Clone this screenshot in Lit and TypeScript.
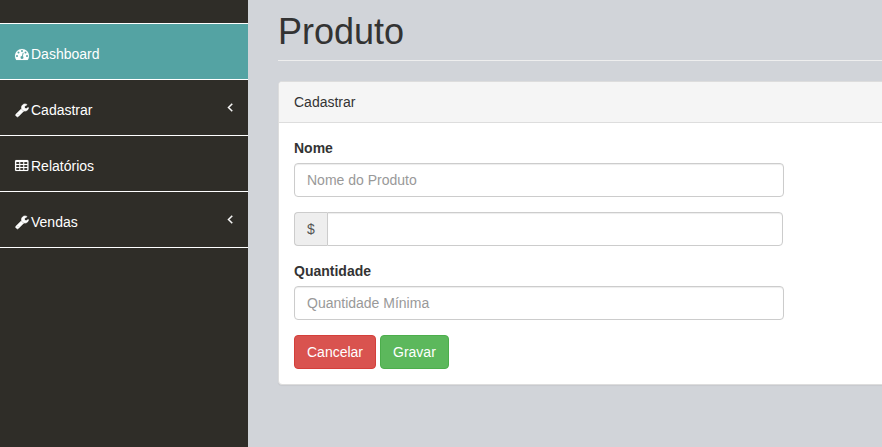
import { LitElement, html, css, svg } from "lit";
import { customElement } from "lit/decorators.js";
import { classMap } from "lit/directives/class-map.js";

const cells = [160, 672, 1184]
  .flatMap((x) => [384, 768, 1152].map((y) => `M${x} ${y}v256h384v-256z`))
  .join("");

const icons: Record<string, string> = {
  gauge: "M384 1152q0-53-37.500-90.500t-90.500-37.500-90.500 37.500-37.500 90.500 37.500 90.500 90.500 37.500 90.500-37.500 37.500-90.500zm192-448q0-53-37.500-90.500t-90.500-37.500-90.500 37.500-37.500 90.500 37.500 90.500 90.500 37.500 90.500-37.500 37.500-90.500zm428 481l101-382q6-26-7.500-48.500t-38.500-29.500-48 6.500-30 39.500l-101 382q-60 5-107 43.500t-63 98.500q-20 77 20 146t117 89 146-20 89-117q16-60-6-117t-72-91zm660-33q0-53-37.500-90.500t-90.500-37.500-90.500 37.500-37.500 90.500 37.500 90.500 90.500 37.500 90.500-37.500 37.500-90.500zm-640-640q0-53-37.500-90.500t-90.500-37.500-90.500 37.500-37.500 90.500 37.500 90.500 90.500 37.500 90.500-37.500 37.500-90.500zm448 192q0-53-37.500-90.500t-90.500-37.500-90.500 37.500-37.500 90.500 37.500 90.500 90.500 37.500 90.500-37.500 37.500-90.500zm320 448q0 261-141 483-19 29-54 29h-1402q-35 0-54-29-141-221-141-483 0-182 71-348t191-286 286-191 348-71 348 71 286 191 191 286 71 348z",
  wrench: "M448 1472q0-26-19-45t-45-19-45 19-19 45 19 45 45 19 45-19 19-45zm644-420l-682 682q-37 37-90 37-52 0-91-37l-106-108q-38-36-38-90 0-53 38-91l681-681q39 98 114.500 173.500t173.500 114.500zm634-435q0 39-23 106-47 134-164.500 217.500t-258.500 83.500q-185 0-316.500-131.500t-131.500-316.500 131.500-316.500 316.500-131.500q58 0 121.500 16.500t107.500 46.500q16 11 16 28t-16 28l-293 169v224l193 107q5-3 79-48.500t135.500-81 70.500-35.500q15 0 23.500 10t8.500 25z",
  table: "M1728 288v1088q0 66-47 113t-113 47h-1408q-66 0-113-47t-47-113v-1088q0-66 47-113t113-47h1408q66 0 113 47t47 113z" + cells,
  angle: "M1203 544q0 13-10 23l-393 393 393 393q10 10 10 23t-10 23l-50 50q-10 10-23 10t-23-10l-466-466q-10-10-10-23t10-23l466-466q10-10 23-10t23 10l50 50q10 10 10 23z",
};

const icon = (name: string, cls = "icon") => html`<svg class="${cls} ${name}" viewBox="0 0 1792 1792" aria-hidden="true">
  ${svg`<path fill="currentColor" stroke="currentColor" fill-rule="evenodd" d=${icons[name]} />`}
</svg>`;

const menu = [
  { label: "Dashboard", icon: "gauge", active: true },
  { label: "Cadastrar", icon: "wrench", expandable: true },
  { label: "Relatórios", icon: "table" },
  { label: "Vendas", icon: "wrench", expandable: true },
];

@customElement("side-menu")
export class SideMenu extends LitElement {
  static styles = css`
    :host {
      display: block;
      width: 248px;
      flex: none;
      box-sizing: border-box;
      padding-top: 23px;
      background: #2f2d28;
    }
    .list {
      list-style: none;
      margin: 0;
      padding: 0;
      border-top: 1px solid #fff;
    }
    .item {
      display: flex;
      align-items: center;
      height: 56px;
      box-sizing: border-box;
      padding: 20px 10px 15px 15px;
      border-bottom: 1px solid #fff;
      color: #fff;
    }
    .active {
      background: #54a3a3;
    }
    .icon {
      width: 14px;
      height: 14px;
      margin-right: 2px;
      flex: none;
      overflow: visible;
      stroke-width: 15px;
    }
    .wrench {
      stroke-width: 90px;
    }
    .arrow {
      width: 14px;
      height: 14px;
      margin: -6px 1px 0 auto;
      stroke-width: 60px;
    }
  `;

  render() {
    return html`<ul class="list">
      ${menu.map((m) => html`<li class=${classMap({ item: true, active: !!m.active })}>
        ${icon(m.icon)}<span>${m.label}</span>${m.expandable ? icon("angle", "arrow") : ""}
      </li>`)}
    </ul>`;
  }
}

@customElement("app-root")
export class AppRoot extends LitElement {
  static styles = css`
    :host {
      display: flex;
      height: 447px;
      overflow: hidden;
      background: #d1d4d9;
      color: #333;
      font: 14px/20px "Liberation Sans", Arial, sans-serif;
    }
    .main {
      flex: 1;
      min-width: 0;
      padding-left: 30px;
    }
    .title {
      margin: 0 0 20px;
      padding: 12px 0 9px;
      border-bottom: 1px solid #eee;
      font-size: 36px;
      font-weight: 400;
      line-height: 39px;
    }
    .panel {
      width: 640px;
      box-sizing: border-box;
      border: 1px solid #ddd;
      border-radius: 4px;
      background: #fff;
      box-shadow: 0 1px 1px rgba(0, 0, 0, 0.05);
    }
    .heading {
      padding: 10px 15px;
      border-bottom: 1px solid #ddd;
      border-radius: 3px 3px 0 0;
      background: #f5f5f5;
    }
    .body {
      padding: 15px;
    }
    .field {
      width: 490px;
      margin-bottom: 15px;
    }
    .label {
      display: block;
      margin-bottom: 5px;
      font-weight: 700;
    }
    .input {
      display: block;
      box-sizing: border-box;
      width: 100%;
      height: 34px;
      padding: 6px 12px;
      border: 1px solid #ccc;
      border-radius: 4px;
      background: #fff;
      box-shadow: inset 0 1px 1px rgba(0, 0, 0, 0.075);
      color: #555;
      font: inherit;
    }
    .input::placeholder {
      color: #999;
      opacity: 1;
    }
    .group {
      display: flex;
      width: 489px;
    }
    .addon {
      box-sizing: border-box;
      width: 33px;
      flex: none;
      padding: 6px 0 6px 12px;
      border: 1px solid #ccc;
      border-right: 0;
      border-radius: 4px 0 0 4px;
      background: #eee;
      color: #555;
    }
    .joined {
      flex: 1;
      min-width: 0;
      border-radius: 0 4px 4px 0;
    }
    .actions {
      display: flex;
      gap: 4px;
    }
    .btn {
      height: 34px;
      padding: 6px 12px;
      border: 1px solid;
      border-radius: 4px;
      color: #fff;
      font: inherit;
    }
    .danger {
      background: #d9534f;
      border-color: #d43f3a;
    }
    .success {
      background: #5cb85c;
      border-color: #4cae4c;
    }
  `;

  render() {
    return html`
      <side-menu></side-menu>
      <main class="main">
        <h1 class="title">Produto</h1>
        <section class="panel">
          <div class="heading">Cadastrar</div>
          <div class="body">
            <div class="field">
              <label class="label" for="nome">Nome</label>
              <input class="input" id="nome" placeholder="Nome do Produto" />
            </div>
            <div class="field group">
              <span class="addon">$</span>
              <input class="input joined" aria-label="$" />
            </div>
            <div class="field">
              <label class="label" for="quantidade">Quantidade</label>
              <input class="input" id="quantidade" placeholder="Quantidade Mínima" />
            </div>
            <div class="actions">
              <button class="btn danger">Cancelar</button>
              <button class="btn success">Gravar</button>
            </div>
          </div>
        </section>
      </main>
    `;
  }
}
